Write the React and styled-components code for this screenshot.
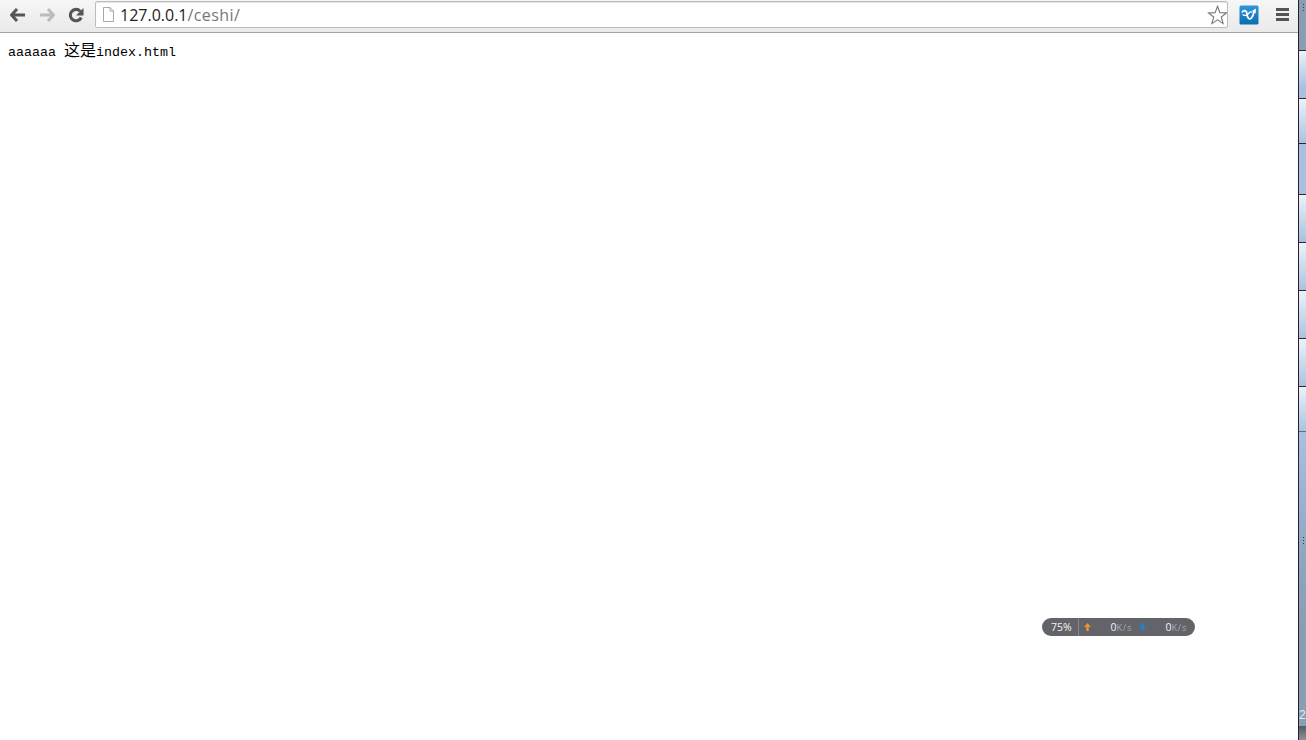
import styled, { createGlobalStyle } from "styled-components";

const GlobalStyle = createGlobalStyle`
  html, body { margin: 0; padding: 0; background: #fff; overflow: hidden; }
`;

const Screen = styled.div`
  display: flex;
  width: 1306px;
  height: 740px;
  overflow: hidden;
`;

const Browser = styled.div`
  position: relative;
  flex: 1;
  display: flex;
  flex-direction: column;
  min-width: 0;
`;

const Toolbar = styled.div`
  display: flex;
  align-items: center;
  height: 33px;
  box-sizing: border-box;
  padding: 0 9px 3px 9px;
  background: linear-gradient(#f6f6f6, #eaeaea);
  border-bottom: 1px solid #a5a5a5;
`;

const NavButton = styled.div`
  display: flex;
  align-items: center;
  justify-content: center;
  width: ${(p) => p.$w}px;
  height: 18px;
  margin-right: ${(p) => p.$gap || 0}px;
  margin-left: ${(p) => p.$left || 0}px;
`;

const Omnibox = styled.div`
  flex: 1;
  display: flex;
  align-items: center;
  height: 27px;
  box-sizing: border-box;
  padding: 0 0 0 6px;
  background: #fff;
  border: 1px solid #bcbcbc;
  border-radius: 2px;
  box-shadow: inset 0 1px 1px #e4e4e4;
`;

const Url = styled.div`
  flex: 1;
  margin-left: 5px;
  font: 16px "Open Sans", "Liberation Sans", sans-serif;
  color: #222;
`;

const UrlPath = styled.span`
  color: #777;
  letter-spacing: 0.4px;
`;

const StarButton = styled.div`
  display: flex;
  width: 20px;
  height: 20px;
`;

const ExtIcon = styled.div`
  display: flex;
  width: 20px;
  height: 20px;
  margin: 0 17px 0 11px;
`;

const MenuButton = styled.div`
  display: flex;
  flex-direction: column;
  gap: 2px;
  width: 13px;
`;

const MenuBar = styled.div`
  height: 3px;
  background: #555;
`;

const Page = styled.div`
  flex: 1;
  background: #fff;
  padding: 8px 8px;
  font: 13.33px/16px "Liberation Mono", "Courier New", monospace;
  color: #000;
`;

const Cjk = styled.span`
  font: 16px/16px "Noto Sans CJK SC", sans-serif;
`;

const SpeedPill = styled.div`
  position: absolute;
  left: 1042px;
  top: 618px;
  width: 153px;
  height: 18px;
  display: flex;
  align-items: center;
  border-radius: 9px;
  background: #62646a;
  font: 10.5px "Open Sans", "Liberation Sans", sans-serif;
  color: #f2f2f2;
`;

const Percent = styled.div`
  width: 37px;
  height: 18px;
  line-height: 18px;
  box-sizing: border-box;
  padding-left: 9px;
  border-right: 1px solid #85878c;
`;

const Speed = styled.div`
  display: flex;
  align-items: center;
  width: ${(p) => p.$w}px;
  padding-left: ${(p) => p.$pad}px;
  box-sizing: border-box;
`;

const Rate = styled.div`
  margin-left: auto;
  padding-right: ${(p) => p.$right}px;
  white-space: nowrap;
`;

const Unit = styled.span`
  color: #a9abae;
  font-size: 9px;
  letter-spacing: 0.8px;
`;

const Taskbar = styled.div`
  width: 7px;
  display: flex;
  flex-direction: column;
  background: #8a9db3;
  border-left: 1px solid #20242a;
  overflow: hidden;
`;

const TaskTop = styled.div`
  position: relative;
  height: 50px;
  background: #8a9db3;
  flex: none;
`;

const Grip = styled.div`
  position: absolute;
  left: 4px;
  top: ${(p) => p.$top}px;
  width: 1px;
  height: 7px;
  background: repeating-linear-gradient(#333c46 0 1px, transparent 1px 3px);
`;

const TaskButton = styled.div`
  flex: none;
  box-sizing: border-box;
  height: ${(p) => p.$h}px;
  border-top: 1px solid #1f2c3d;
  background: ${(p) =>
    p.$active
      ? "#a9c1de"
      : "linear-gradient(#eef2f8, #cfdcee 45%, #abc3e0)"};
`;

const TaskGap = styled.div`
  flex: none;
  height: ${(p) => p.$h}px;
  background: #a9c1de;
`;

const TaskBottom = styled.div`
  position: relative;
  flex: 1;
  border-top: 1px solid #5d6f85;
  background: linear-gradient(#a9c1de, #90a7c2 120px, #8a9db3 190px);
`;

const ClockDigit = styled.div`
  position: absolute;
  left: 0;
  top: 276px;
  width: 7px;
  overflow: hidden;
  font: 12px/14px "Liberation Sans", sans-serif;
  color: #e8edf3;
`;

const TrayEnd = styled.div`
  position: absolute;
  left: 0;
  right: 0;
  bottom: 0;
  height: 14px;
  background: linear-gradient(#555b62, #8d9197);
`;

function BackArrow({ color }) {
  return (
    <svg width="16" height="14" viewBox="0 0 16 14">
      <path d="M7 1 L1.5 7 L7 13 M2 7 H15" fill="none" stroke={color} strokeWidth="3" />
    </svg>
  );
}

function ForwardArrow({ color }) {
  return (
    <svg width="16" height="14" viewBox="0 0 16 14">
      <path d="M9 1 L14.5 7 L9 13 M14 7 H1" fill="none" stroke={color} strokeWidth="3" />
    </svg>
  );
}

function Reload() {
  return (
    <svg width="16" height="16" viewBox="0 0 16 16">
      <path d="M13.2 10.5 A5.7 5.7 0 1 1 12.2 4.2" fill="none" stroke="#555" strokeWidth="3.1" />
      <path d="M15.5 1 V8.5 H8 Z" fill="#555" />
    </svg>
  );
}

function PageIcon() {
  return (
    <svg width="13" height="15" viewBox="0 0 13 15">
      <path d="M1.5 .5 H8 L11.5 4 V14.5 H1.5 Z M8 .5 V4 H11.5" fill="#fff" stroke="#a8a8a8" />
    </svg>
  );
}

function Star() {
  return (
    <svg width="20" height="20" viewBox="-0.5 0 20 20">
      <path
        d="M10 1.3 L12.4 7.6 L19 7.9 L13.8 12 L15.6 18.6 L10 14.9 L4.4 18.6 L6.2 12 L1 7.9 L7.6 7.6 Z"
        fill="#fff"
        stroke="#777"
        strokeWidth="1.1"
      />
    </svg>
  );
}

function ExtLogo() {
  return (
    <svg width="20" height="20" viewBox="0 0 20 20">
      <defs>
        <linearGradient id="extFill" x1="0" y1="0" x2="0" y2="1">
          <stop offset="0" stopColor="#2f96dc" />
          <stop offset="1" stopColor="#0a6db0" />
        </linearGradient>
      </defs>
      <rect x="0.5" y="0.5" width="19" height="19" rx="1.5" fill="url(#extFill)" />
      <path
        d="M3 7.5 C5 4 8 6 8 9 C8 13 10.5 15.5 12.8 12.5 C14.3 10.5 14.6 8 15.5 5.5"
        fill="none"
        stroke="#fff"
        strokeWidth="1.8"
      />
      <path d="M3.5 9.5 C6 11.5 8.5 10 10 8 C11 6.5 12 6.5 13 7.5" fill="none" stroke="#fff" strokeWidth="1.3" />
      <path d="M12.8 6 L17 3.5 L16.6 8.4 Z" fill="#fff" />
    </svg>
  );
}

function SmallUp() {
  return (
    <svg width="7" height="8" viewBox="0 0 7 8">
      <path d="M3.5 0 L7 4 H4.7 V8 H2.3 V4 H0 Z" fill="#e8962a" />
    </svg>
  );
}

function SmallDown() {
  return (
    <svg width="7" height="8" viewBox="0 0 7 8">
      <path d="M3.5 8 L7 4 H4.7 V0 H2.3 V4 H0 Z" fill="#1b84d6" />
    </svg>
  );
}

function App() {
  return (
    <Screen>
      <GlobalStyle />
      <Browser>
        <Toolbar>
          <NavButton $w={16} $gap={13} $left={1}><BackArrow color="#555" /></NavButton>
          <NavButton $w={16} $gap={13}><ForwardArrow color="#bbb" /></NavButton>
          <NavButton $w={16} $gap={11}><Reload /></NavButton>
          <Omnibox>
            <PageIcon />
            <Url>127.0.0.1<UrlPath>/ceshi/</UrlPath></Url>
            <StarButton><Star /></StarButton>
          </Omnibox>
          <ExtIcon><ExtLogo /></ExtIcon>
          <MenuButton>
            <MenuBar />
            <MenuBar />
            <MenuBar />
          </MenuButton>
        </Toolbar>
        <Page>aaaaaa <Cjk>这是</Cjk>index.html</Page>
        <SpeedPill>
          <Percent>75%</Percent>
          <Speed $w={55} $pad={5}>
            <SmallUp />
            <Rate $right={2}>0<Unit>K/s</Unit></Rate>
          </Speed>
          <Speed $w={61} $pad={5}>
            <SmallDown />
            <Rate $right={8}>0<Unit>K/s</Unit></Rate>
          </Speed>
        </SpeedPill>
      </Browser>
      <Taskbar>
        <TaskTop>
          <Grip $top={4} />
        </TaskTop>
        <TaskButton $h={36} />
        <TaskGap $h={12} />
        <TaskButton $h={45} />
        <TaskButton $h={51} $active />
        <TaskButton $h={46} />
        <TaskGap $h={2} />
        <TaskButton $h={48} />
        <TaskButton $h={48} />
        <TaskButton $h={48} />
        <TaskButton $h={45} />
        <TaskBottom>
          <Grip $top={105} />
          <ClockDigit>2</ClockDigit>
          <TrayEnd />
        </TaskBottom>
      </Taskbar>
    </Screen>
  );
}

export default App;
